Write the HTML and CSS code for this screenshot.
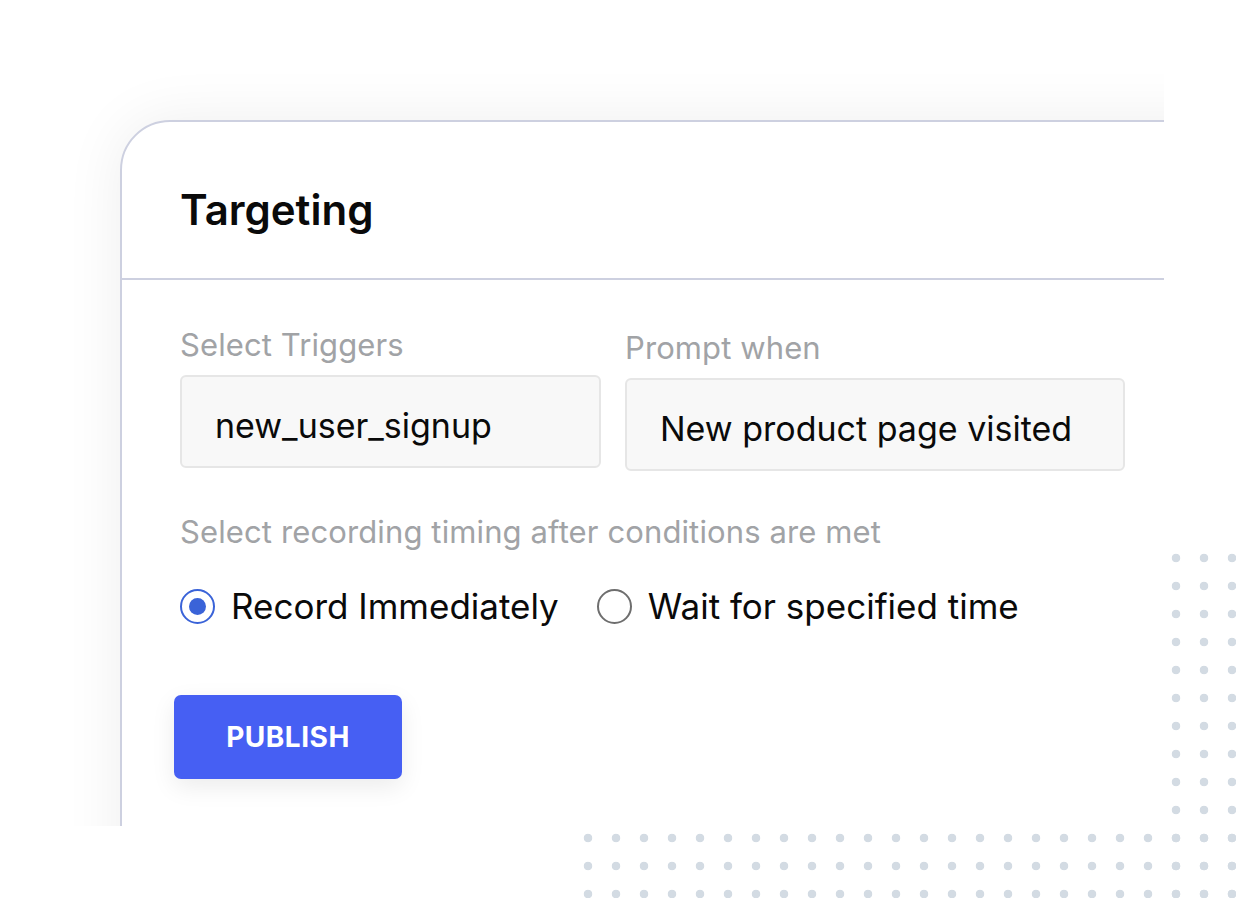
FILE: index.html
```html
<!DOCTYPE html>
<html lang="en">
<head>
    <meta charset="UTF-8">
    <meta name="viewport" content="width=device-width, initial-scale=1.0">
    <title>Targeting</title>
    <link rel="stylesheet" href="styles.css">
</head>
<body>

    <!-- Card, clipped by the frame -->
    <div class="frame">
        <div class="card">
            <div class="card-header">
                <h1>Targeting</h1>
            </div>

            <div class="card-body">
                <div class="fields">
                    <div class="field field-triggers">
                        <label>Select Triggers</label>
                        <div class="input">new_user_signup</div>
                    </div>
                    <div class="field field-prompt">
                        <label>Prompt when</label>
                        <div class="input">New product page visited</div>
                    </div>
                </div>

                <p class="timing-label">Select recording timing after conditions are met</p>

                <div class="radios">
                    <div class="radio-option">
                        <span class="radio checked"></span>
                        <span>Record Immediately</span>
                    </div>
                    <div class="radio-option">
                        <span class="radio"></span>
                        <span>Wait for specified time</span>
                    </div>
                </div>

                <button class="publish">PUBLISH</button>
            </div>
        </div>
    </div>

    <!-- Decorative dot grids -->
    <div class="dots dots-side"></div>
    <div class="dots dots-bottom"></div>

</body>
</html>
```

FILE: styles.css
```css
body {
    font-family: 'Inter', 'Noto Sans', sans-serif;
    margin: 0;
    background-color: #ffffff;
    width: 1236px;
    height: 898px;
    overflow: hidden;
    position: relative;
}

/* Frame clips the card on the right and bottom */
.frame {
    width: 1164px;
    height: 826px;
    overflow: hidden;
    padding: 120px 0 0 120px;
    box-sizing: border-box;
}

.card {
    width: 1120px;
    height: 800px;
    background-color: #ffffff;
    border: 2px solid #cdd0e0;
    border-top-left-radius: 50px;
    box-shadow: 0 0 60px rgba(0, 0, 0, 0.07);
}

/* Header */
.card-header {
    height: 158px;
    box-sizing: border-box;
    padding: 0 0 0 58px;
    display: flex;
    align-items: center;
    border-bottom: 2px solid #cdd0e0;
}

.card-header h1 {
    margin: 0;
    padding-top: 18px;
    font-size: 42px;
    font-weight: 600;
    color: #0a0a0a;
}

/* Body */
.card-body {
    padding: 46px 0 0 58px;
}

.fields {
    display: flex;
    gap: 24px;
}

.field label {
    display: block;
    font-size: 31px;
    letter-spacing: 0.1px;
    color: #a1a3a6;
    margin-bottom: 12px;
}

.field-prompt {
    margin-top: 3px;
}

.input {
    height: 93px;
    box-sizing: border-box;
    padding: 8px 0 0 33px;
    display: flex;
    align-items: center;
    background-color: #f8f8f8;
    border: 2px solid #e6e6e6;
    border-radius: 6px;
    font-size: 34px;
    color: #0a0a0a;
}

.field-triggers .input {
    width: 421px;
}

.field-prompt .input {
    width: 500px;
}

.timing-label {
    margin: 42px 0 0;
    font-size: 31px;
    letter-spacing: 0.12px;
    color: #a1a3a6;
}

/* Radios */
.radios {
    display: flex;
    gap: 38px;
    margin-top: 35px;
    font-size: 35px;
    color: #0a0a0a;
}

.radio-option {
    display: flex;
    align-items: center;
    gap: 16px;
}

.radio {
    width: 35px;
    height: 35px;
    box-sizing: border-box;
    border: 2px solid #6e6e6e;
    border-radius: 50%;
    display: flex;
    align-items: center;
    justify-content: center;
}

.radio.checked {
    border-color: #3a63d8;
}

.radio.checked::after {
    content: '';
    width: 17px;
    height: 17px;
    border-radius: 50%;
    background-color: #3a63d8;
}

/* Button */
.publish {
    margin: 68px 0 0 -6px;
    width: 228px;
    height: 84px;
    background-color: #465ff3;
    color: #ffffff;
    border: none;
    border-radius: 7px;
    font-family: 'Inter', sans-serif;
    font-size: 28px;
    font-weight: 700;
    letter-spacing: 0.5px;
    box-shadow: 0 8px 24px rgba(0, 0, 0, 0.08);
}

/* Dot grids */
.dots {
    position: absolute;
    background-image: radial-gradient(circle, #d3dbe3 4px, transparent 4.6px);
    background-size: 28px 28px;
}

.dots-side {
    left: 1162px;
    top: 544px;
    width: 74px;
    height: 364px;
}

.dots-bottom {
    left: 574px;
    top: 824px;
    width: 662px;
    height: 84px;
}
```
